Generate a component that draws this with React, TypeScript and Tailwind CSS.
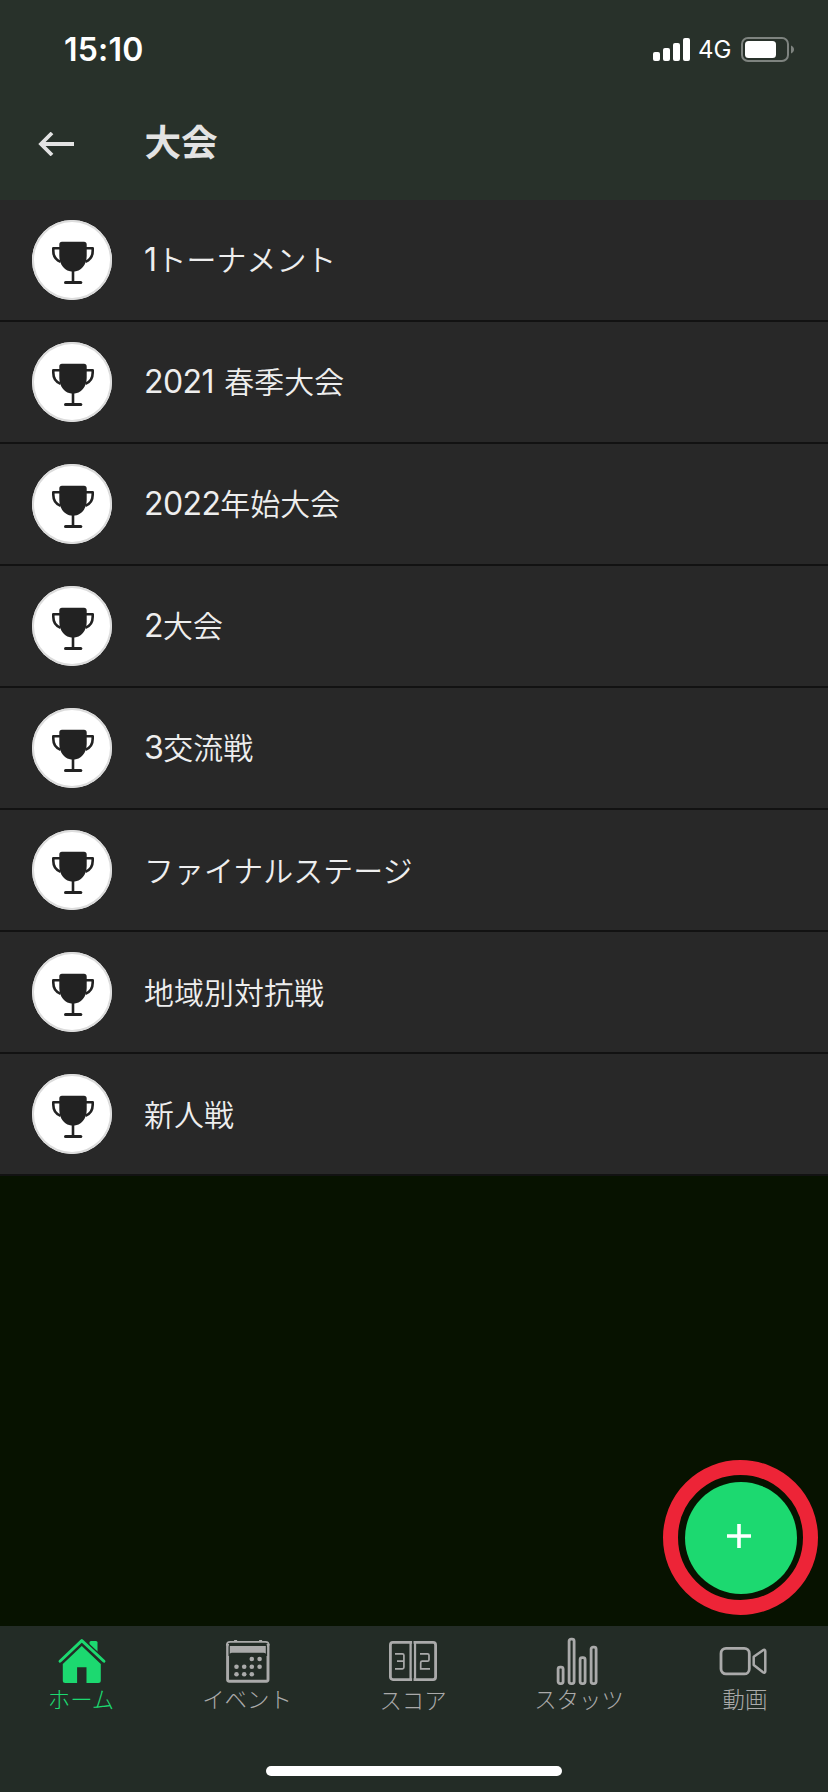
import { Fragment, type ReactNode } from "react";

const tournaments = [
  "1トーナメント",
  "2021 春季大会",
  "2022年始大会",
  "2大会",
  "3交流戦",
  "ファイナルステージ",
  "地域別対抗戦",
  "新人戦",
];

function TrophyIcon() {
  return (
    <svg viewBox="0 0 80 80" className="h-20 w-20" fill="none">
      <path d="M30 21.700h22c1.700 0 2.700 1 2.700 2.700V36c0 8.500-5.500 15.700-13.700 15.700S27.300 44.500 27.300 36V24.400c0-1.700 1-2.700 2.700-2.700z" fill="#222" />
      <path d="M28 28.200h-6.700v2.500c0 5.300 2.700 9.300 7.200 11M54 28.200h6.700v2.500c0 5.300-2.700 9.300-7.200 11" stroke="#222" strokeWidth="2.600" strokeLinejoin="round" />
      <path d="M41 50v12" stroke="#222" strokeWidth="2.600" />
      <path d="M33.500 62.500h15.300" stroke="#222" strokeWidth="3" strokeLinecap="round" />
    </svg>
  );
}

function HomeIcon() {
  return (
    <svg viewBox="0 0 48 48" className="h-12 w-12 overflow-visible" fill="none">
      <path d="M32.500 3.500A1.500 1.500 0 0 1 34 2h5a1.500 1.500 0 0 1 1.500 1.500V16l-8-7z" fill="#1cd970" />
      <path d="M3 22.300 24.800 1.600 47 22.300" stroke="#232c26" strokeWidth="5.500" />
      <path d="M24.800 7 43.800 25v16.500a2.500 2.500 0 0 1-2.500 2.500H29.500V28.300h-9.400V44H8.300a2.500 2.500 0 0 1-2.500-2.500V25z" fill="#1cd970" />
      <path d="M3 22.300 24.800 1.600 47 22.300" stroke="#1cd970" strokeWidth="2.900" strokeLinecap="round" strokeLinejoin="round" />
    </svg>
  );
}

const dots = [
  [28, 20], [35.8, 20],
  [12.7, 27.7], [20.4, 27.7], [28, 27.7], [35.8, 27.7],
  [12.7, 35.3], [20.4, 35.3], [28, 35.3],
];

function CalendarIcon() {
  return (
    <svg viewBox="-0.8 0 48 48" className="h-12 w-12" fill="none">
      <path d="M3.800 5v35.500c0 1 .7 1.700 1.700 1.700h37c1 0 1.700-.7 1.700-1.700V5" stroke="#aaa" strokeWidth="2.900" />
      <path d="M2.900 6.500c0-2.300 1.200-3.600 3.400-3.600h35.400c2.200 0 3.400 1.300 3.400 3.600" stroke="#aaa" strokeWidth="1.600" />
      <path d="M5.300 17V8c0-1.900 1-3 3-3h31.400c2 0 3 1.100 3 3v9" stroke="#232c26" strokeWidth="1.200" />
      <path d="M6 14.700V7h36v7.700c-.6-.7-1.300-1-2.200-1H8.200c-.9 0-1.600.3-2.200 1z" fill="#aaa" />
      <path d="M10.300 1h3v2h-3zM35.300 1h3v2h-3z" fill="#aaa" />
      {dots.map(([x, y]) => (
        <circle key={`${x}-${y}`} cx={x} cy={y} r="2.300" fill="#aaa" />
      ))}
    </svg>
  );
}

function ScoreIcon() {
  return (
    <svg viewBox="0 0 48 48" className="h-12 w-12" fill="none" stroke="#aaa">
      <rect x="1.400" y="3.400" width="45.200" height="37.200" rx="2.500" strokeWidth="2.800" />
      <path d="M21.600 4v36M26 4v36" strokeWidth="2.300" />
      <path d="M23.800 2v40" stroke="#232c26" strokeWidth="1.400" />
      <path d="M6 14.800h7.400c1 0 1.500.5 1.500 1.500v12c0 1-.5 1.500-1.500 1.500H6M8 22.200h6.500" strokeWidth="1.700" />
      <path d="M31 14.800h7.500c1 0 1.500.5 1.500 1.500v4.400c0 1-.5 1.500-1.500 1.500h-5.300c-1 0-1.500.5-1.500 1.500v6.100h9.300" strokeWidth="1.700" />
    </svg>
  );
}

function StatsIcon() {
  return (
    <svg viewBox="0.5 0 48 48" className="h-12 w-12 overflow-visible" fill="none" stroke="#aaa" strokeWidth="2.800">
      <rect x="3.600" y="28.100" width="5" height="16.500" rx="2" />
      <rect x="14.600" y="0.100" width="5" height="44.500" rx="2" />
      <rect x="25.600" y="18.700" width="5" height="25.900" rx="2" />
      <rect x="36.600" y="8.100" width="5" height="36.500" rx="2" />
    </svg>
  );
}

function VideoIcon() {
  return (
    <svg viewBox="0 0 48 48" className="h-12 w-12 overflow-visible" fill="none" stroke="#aaa" strokeLinejoin="round">
      <rect x="0" y="9.400" width="28.300" height="25.500" rx="5" strokeWidth="2.800" />
      <path d="m32.700 17.700 9.300-6.400c1.300-.9 2.300-.3 2.300 1v20c0 1.300-1 1.900-2.300 1l-9.300-7.300z" strokeWidth="2.500" />
    </svg>
  );
}

const tabs: { label: string; icon: ReactNode; active?: boolean; shift?: string }[] = [
  { label: "ホーム", icon: <HomeIcon />, active: true },
  { label: "イベント", icon: <CalendarIcon /> },
  { label: "スコア", icon: <ScoreIcon />, shift: "pt-px" },
  { label: "スタッツ", icon: <StatsIcon /> },
  { label: "動画", icon: <VideoIcon /> },
];

// Digits are set slightly larger than the Japanese text around them
function MixedText({ text }: { text: string }) {
  return (
    <span className="flex items-baseline pb-[2px] text-[29.900px] leading-10 font-[350] tracking-[0.100px] whitespace-pre">
      {text.split(/([0-9]+ ?)/).filter(Boolean).map((part, i) => (
        <Fragment key={i}>
          {/[0-9]/.test(part) ? (
            <span className="font-['Inter'] text-[32px] font-normal tracking-[-0.600px] [word-spacing:2px]">{part}</span>
          ) : (
            <span>{part}</span>
          )}
        </Fragment>
      ))}
    </span>
  );
}

function StatusBar() {
  return (
    <div className="flex h-[88px] items-start justify-between pt-[30px] pr-[33px] pl-16 text-white">
      <span className="font-['Inter'] text-[32px] leading-10 font-semibold tracking-[0.200px]">15:10</span>
      <div className="flex items-center pt-[7px]">
        <div className="mb-[2px] flex h-6 items-end gap-[3px]">
          <div className="h-[9px] w-[7px] rounded-[2px] bg-white" />
          <div className="h-[13px] w-[7px] rounded-[2px] bg-white" />
          <div className="h-[18px] w-[7px] rounded-[2px] bg-white" />
          <div className="h-[23px] w-[7px] rounded-[2px] bg-white" />
        </div>
        <span className="ml-2 w-[43px] font-['Inter'] text-[24px] leading-6">4G</span>
        <svg viewBox="0 0 54 26" className="h-[26px] w-[54px]" fill="none">
          <rect x="1" y="1" width="46" height="23" rx="6" stroke="#7e837f" strokeWidth="2" />
          <rect x="4" y="4" width="31" height="17" rx="3.500" fill="#fff" />
          <path d="M50 8.500c4 1.500 4 6.500 0 8z" fill="#7e837f" />
        </svg>
      </div>
    </div>
  );
}

export default function App() {
  return (
    <div className="flex h-[1792px] w-[828px] flex-col overflow-hidden bg-[#071200] font-['Noto_Sans_CJK_JP',sans-serif]">
      <header className="h-[200px] shrink-0 bg-[#28312a]">
        <StatusBar />
        <div className="flex h-28 items-center pb-1 pl-[38px] text-[#e3e3e3]">
          <svg viewBox="0 0 36 24" className="mt-1 h-6 w-9" fill="none" stroke="currentColor" strokeWidth="3.800">
            <path d="M36 12H3M14 1 3 12l11 11" />
          </svg>
          <h1 className="mb-[3px] ml-[70.500px] text-[36.600px] leading-[52px] font-bold">大会</h1>
        </div>
      </header>

      <ul className="bg-[#282828]">
        {tournaments.map((name) => (
          <li key={name} className="flex h-[122px] items-center gap-8 border-b-2 border-[#121212] pl-8 text-[#eee]">
            <div className="h-20 w-20 shrink-0 rounded-full bg-white shadow-[inset_0_0_0_2px_#dcdcdc]">
              <TrophyIcon />
            </div>
            <MixedText text={name} />
          </li>
        ))}
      </ul>

      <div className="flex flex-1 items-end justify-end pr-[10px] pb-[11px]">
        <button
          aria-label="追加"
          className="flex h-[155px] w-[155px] items-center justify-center rounded-full border-[15px] border-[#ed2437]"
        >
          <span className="flex h-28 w-28 items-center justify-center rounded-full bg-[#1cd970]">
            <svg viewBox="0 0 24 24" className="mr-[3px] mb-[3px] h-6 w-6" stroke="#fff" strokeWidth="3.600">
              <path d="M12 0v24M0 12h24" />
            </svg>
          </span>
        </button>
      </div>

      <nav className="flex h-[166px] shrink-0 flex-col justify-between bg-[#232c26] pb-4">
        <div className="-ml-[2px] grid grid-cols-5 pt-[13px]">
          {tabs.map((tab) => (
            <div
              key={tab.label}
              className={`flex flex-col items-center text-[22.400px] leading-8 font-light ${tab.active ? "text-[#1cd970]" : "text-[#aaa]"}`}
            >
              {tab.icon}
              <span className={`mt-[-5px] ${tab.shift ?? ""}`}>{tab.label}</span>
            </div>
          ))}
        </div>
        <div className="mx-auto h-[10px] w-[296px] rounded-full bg-white" />
      </nav>
    </div>
  );
}
